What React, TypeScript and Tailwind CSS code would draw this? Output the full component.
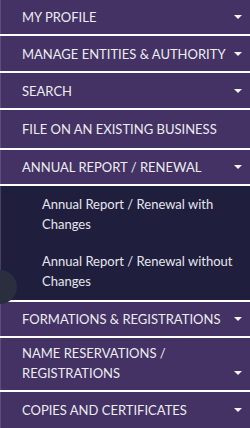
import React, { useState } from 'react';

type MenuItem = {
  label: string;
  hasCaret: boolean;
  height: string;
  children?: string[];
};

const items: MenuItem[] = [
  { label: 'MY PROFILE', hasCaret: true, height: 'h-[34px]' },
  { label: 'MANAGE ENTITIES & AUTHORITY', hasCaret: true, height: 'h-[35px]' },
  { label: 'SEARCH', hasCaret: true, height: 'h-[35px]' },
  { label: 'FILE ON AN EXISTING BUSINESS', hasCaret: false, height: 'h-[38px]' },
  {
    label: 'ANNUAL REPORT / RENEWAL',
    hasCaret: true,
    height: 'h-[34px]',
    children: ['Annual Report / Renewal with Changes', 'Annual Report / Renewal without Changes'],
  },
  { label: 'FORMATIONS & REGISTRATIONS', hasCaret: true, height: 'h-[34px]' },
  { label: 'NAME RESERVATIONS / REGISTRATIONS', hasCaret: true, height: 'h-[52px]' },
  { label: 'COPIES AND CERTIFICATES', hasCaret: true, height: 'h-[36px]' },
];

const Caret: React.FC = () => (
  <svg width="8" height="4" viewBox="0 0 8 4" className="shrink-0">
    <path d="M0 0 H8 L4 4 Z" fill="#f4f4f8" />
  </svg>
);

const App: React.FC = () => {
  const [open, setOpen] = useState<string>('ANNUAL REPORT / RENEWAL');

  return (
    <div className="relative w-[250px] h-[428px] overflow-hidden bg-white font-['Lato',sans-serif]">
      {items.map((item, i) => {
        const tall = item.label.startsWith('NAME');
        return (
          <div key={item.label} className={i > 0 ? 'border-t-2 border-white' : ''}>
            <button
              onClick={() => setOpen(open === item.label ? '' : item.label)}
              className={`flex w-full justify-between gap-[6px] border-l border-[#5d4e7e] bg-[#433263] pl-[21px] pr-[8px] text-left text-[13px] leading-[20px] text-[#ececf2] ${item.height} ${
                tall ? 'items-end pb-[7px]' : 'items-center'
              }`}
            >
              <span className={tall ? 'max-w-[180px]' : 'flex-1'}>{item.label}</span>
              {item.hasCaret && (
                <span className="flex h-[20px] items-center">
                  <Caret />
                </span>
              )}
            </button>
            {item.children && open === item.label && (
              <div className="border-t-2 border-white">
                <div className="flex flex-col border-l border-[#4a3d68] bg-[#1f1e3d] py-[9px] pl-[41px] pr-[12px]">
                  {item.children.map((child, j) => (
                    <a
                      key={child}
                      href="#"
                      className={`block text-[13px] leading-[19.5px] text-[#e6e6ee] ${j > 0 ? 'mt-[18px]' : ''}`}
                    >
                      {child}
                    </a>
                  ))}
                </div>
              </div>
            )}
          </div>
        );
      })}
      <div className="absolute left-[-17px] top-[270px] h-[34px] w-[34px] rounded-full bg-[#2b2e3f]" />
    </div>
  );
};

export default App;
